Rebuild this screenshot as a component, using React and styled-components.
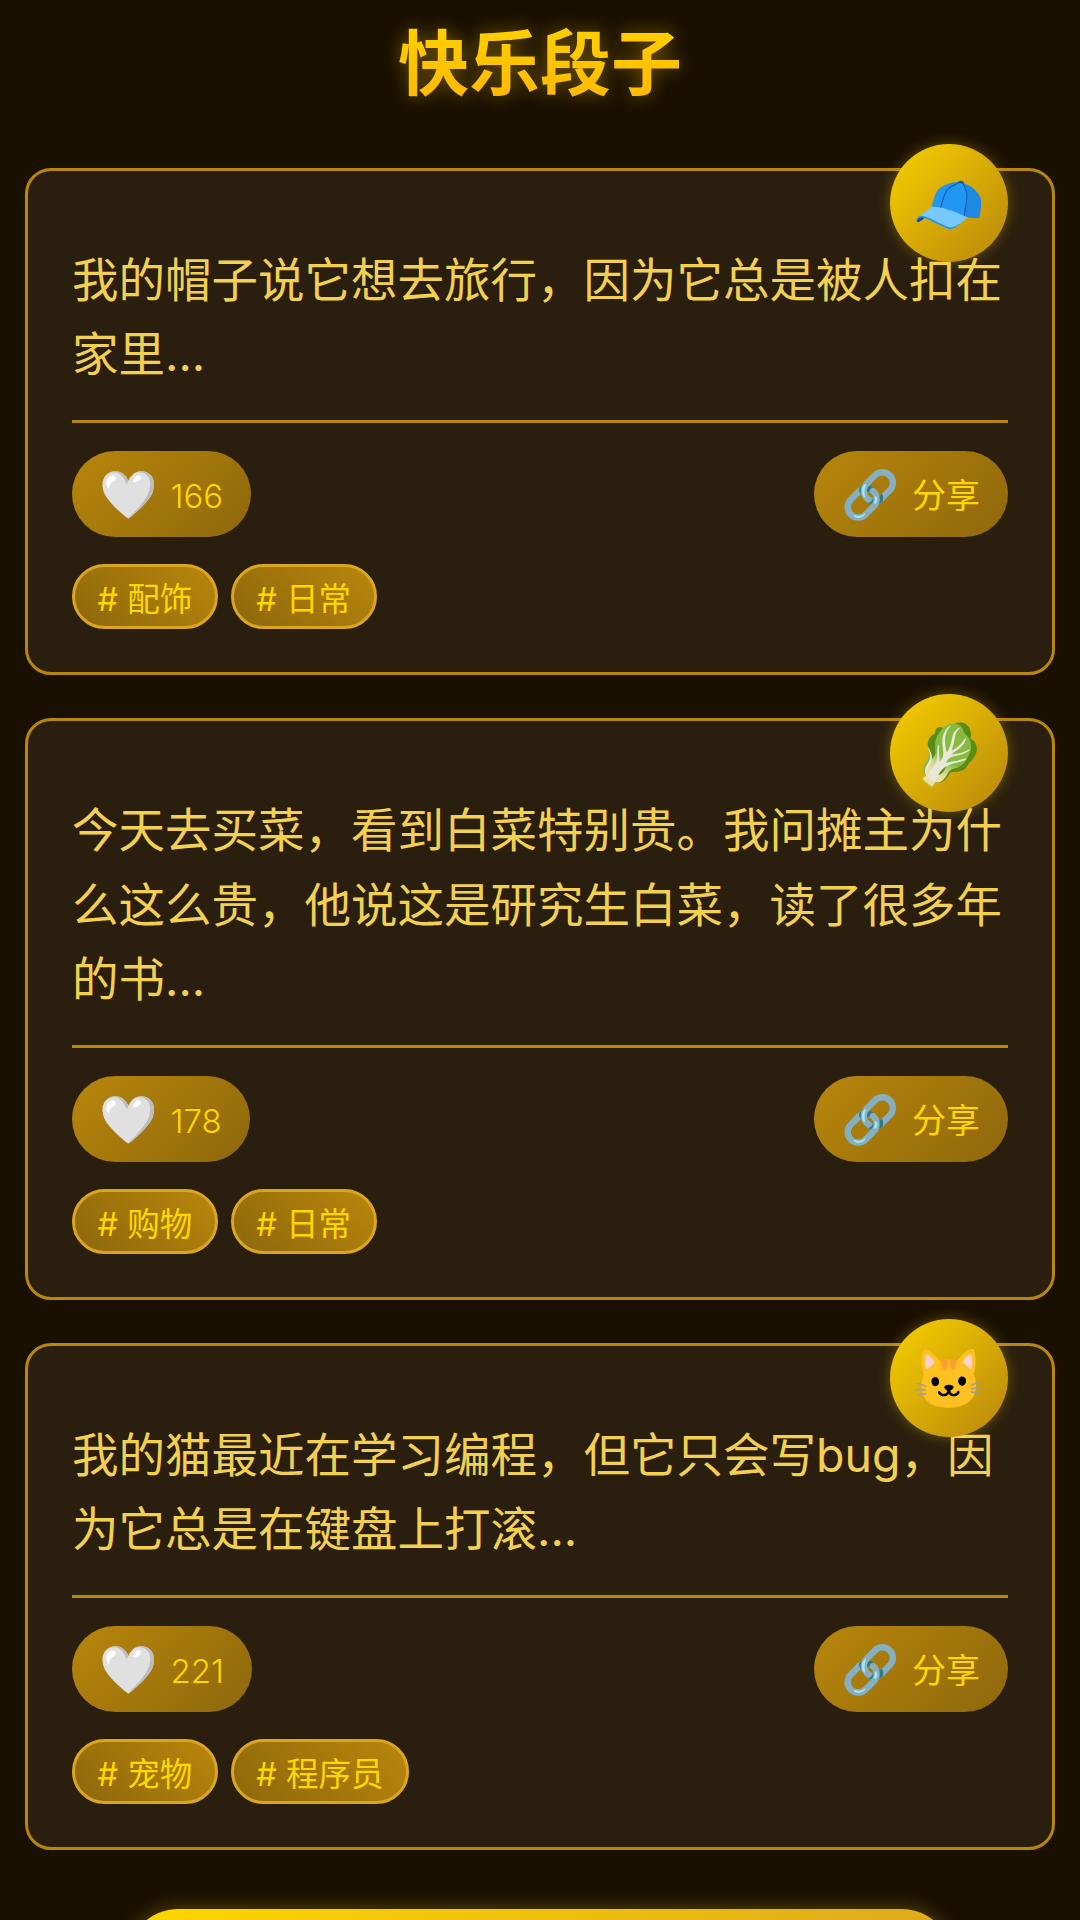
import React from "react";
import styled, { createGlobalStyle } from "styled-components";

const Global = createGlobalStyle`
  html, body { margin: 0; padding: 0; background: #1a1000; }
  body { font-family: Inter, "Noto Sans CJK SC", "Noto Color Emoji", sans-serif; }
  * { box-sizing: border-box; }
`;

const Page = styled.div`
  width: 1080px;
  height: 1920px;
  overflow: hidden;
  padding: 0 25px;
  background: #1a1000;
`;

const Title = styled.h1`
  margin: 0;
  height: 168px;
  padding-top: 16px;
  text-align: center;
  font-size: 71px;
  line-height: 94px;
  font-weight: 700;
  color: #ffc400;
  background: linear-gradient(180deg, #ffd700, #ffa500);
  -webkit-background-clip: text;
  background-clip: text;
  -webkit-text-fill-color: transparent;
  filter: drop-shadow(0 0 9px rgba(255, 200, 0, 0.4));
`;

const Feed = styled.div`
  display: flex;
  flex-direction: column;
  gap: 43.5px;
`;

const Card = styled.article`
  position: relative;
  padding: 72px 44px 43px;
  background: #2a1f0e;
  border: 3px solid #b8860b;
  border-radius: 26px;
`;

const Avatar = styled.div`
  position: absolute;
  top: -27px;
  right: 44px;
  width: 118px;
  height: 118px;
  border-radius: 50%;
  display: flex;
  align-items: center;
  justify-content: center;
  font-size: 59px;
  background: linear-gradient(135deg, #f7d000, #b8860b);
  box-shadow: 0 0 14px rgba(255, 215, 0, 0.3);
`;

const Body = styled.p`
  margin: 0;
  padding: 0 0 28px;
  border-bottom: 3px solid #b8860b;
  font-size: 46.5px;
  line-height: 74.4px;
  font-weight: 400;
  color: #f3d050;
`;

const Actions = styled.div`
  display: flex;
  justify-content: space-between;
  margin-top: 28px;
`;

const Pill = styled.button`
  display: flex;
  align-items: center;
  gap: 12px;
  height: 86px;
  padding: 0 28px 0 27px;
  border: 0;
  border-radius: 43px;
  font-family: inherit;
  font-size: 34px;
  font-weight: 400;
  color: #ffd700;
  background: linear-gradient(135deg, #b8860b, rgba(184, 134, 11, 0.7));
`;

const Count = styled.span`
  margin-top: 4px;
  margin-left: 1px;
  font-size: 33px;
  font-weight: 300;
`;

const Emoji = styled.span`
  font-size: 47px;
  line-height: 1;
`;

const Tags = styled.div`
  display: flex;
  gap: 13px;
  margin-top: 27px;
`;

const Tag = styled.span`
  height: 65px;
  padding: 0 22.5px;
  display: flex;
  align-items: center;
  border: 3px solid #daa520;
  border-radius: 33px;
  font-size: 32.5px;
  font-weight: 400;
  color: #ffd700;
  background: linear-gradient(45deg, rgba(184, 134, 11, 0.7), #b8860b);
`;

const More = styled.button`
  display: block;
  width: 824px;
  height: 100px;
  margin: 59px 0 0 103px;
  border: 0;
  border-radius: 50px;
  background: linear-gradient(135deg, #ffd700, #daa520);
  box-shadow: 0 0 20px rgba(255, 215, 0, 0.3);
`;

const jokes = [
  { icon: "🧢", text: "我的帽子说它想去旅行，因为它总是被人扣在家里...", likes: 166, tags: ["配饰", "日常"] },
  { icon: "🥬", text: "今天去买菜，看到白菜特别贵。我问摊主为什么这么贵，他说这是研究生白菜，读了很多年的书...", likes: 178, tags: ["购物", "日常"] },
  { icon: "🐱", text: "我的猫最近在学习编程，但它只会写bug，因为它总是在键盘上打滚...", likes: 221, tags: ["宠物", "程序员"] },
];

export default function App() {
  return (
    <>
      <Global />
      <Page>
        <Title>快乐段子</Title>
        <Feed>
          {jokes.map((j) => (
            <Card key={j.likes}>
              <Avatar>{j.icon}</Avatar>
              <Body>{j.text}</Body>
              <Actions>
                <Pill><Emoji>🤍</Emoji><Count>{j.likes}</Count></Pill>
                <Pill><Emoji>🔗</Emoji>分享</Pill>
              </Actions>
              <Tags>
                {j.tags.map((t) => <Tag key={t}># {t}</Tag>)}
              </Tags>
            </Card>
          ))}
        </Feed>
        <More />
      </Page>
    </>
  );
}
